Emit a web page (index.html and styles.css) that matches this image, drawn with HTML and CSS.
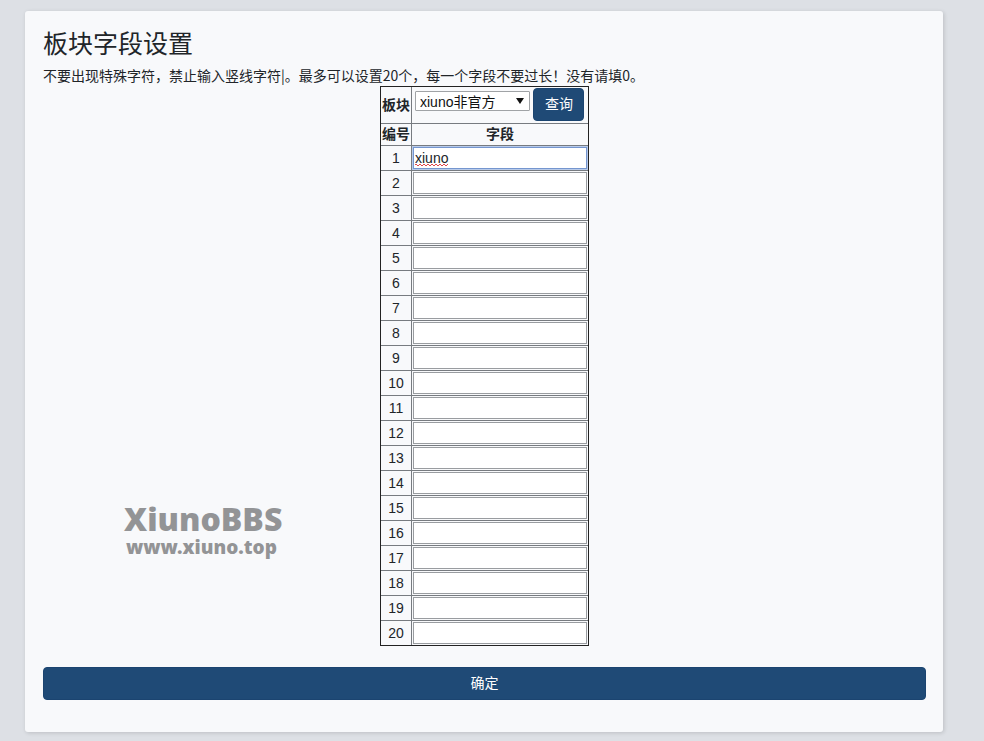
FILE: index.html
```html
<!DOCTYPE html>
<html lang="zh-CN">
<head>
<meta charset="utf-8">
<title>板块字段设置</title>
<link rel="stylesheet" href="styles.css">
</head>
<body>
<main class="card">
  <h1 class="title">板块字段设置</h1>
  <p class="hint">不要出现特殊字符，禁止输入竖线字符|。最多可以设置20个，每一个字段不要过长！没有请填0。</p>
  <form>
    <table class="fields">
      <thead>
        <tr class="query-row">
          <th><label for="forum">板块</label></th>
          <td>
            <div class="query">
              <span class="picker"><select id="forum"><option>xiuno非官方</option></select></span>
              <button class="btn" type="button">查询</button>
            </div>
          </td>
        </tr>
        <tr class="head-row"><th>编号</th><th>字段</th></tr>
      </thead>
      <tbody id="rows"></tbody>
    </table>
    <button class="btn btn-block" type="submit">确定</button>
  </form>
  <div class="watermark">
    <div class="brand">XiunoBBS</div>
    <div class="site">www.xiuno.top</div>
  </div>
</main>
<script src="rows.js"></script>
</body>
</html>
```
FILE: rows.js
```js
const body = document.getElementById("rows");
for (let i = 1; i <= 20; i++) {
  const row = body.insertRow();
  const label = document.createElement("label");
  label.htmlFor = "field" + i;
  label.textContent = i;
  row.insertCell().append(label);
  const input = document.createElement("input");
  input.type = "text";
  input.id = "field" + i;
  input.className = i === 1 ? "field active" : "field";
  input.value = i === 1 ? "xiuno" : "";
  row.insertCell().append(input);
}
```
FILE: styles.css
```css
* { box-sizing: border-box; }
body {
  margin: 0;
  padding: 11px 41px 9px 25px;
  background: #dde0e5;
  color: #212529;
  font: 14px/21px "Liberation Sans", "Noto Sans CJK SC", sans-serif;
}
.card {
  position: relative;
  padding: 17px 17px 32px 18px;
  background: #f8f9fb;
  border-radius: 3px;
  box-shadow: 1px 1px 4px rgba(0, 0, 0, 0.15);
}
.title {
  margin: 0 0 5px;
  font-size: 25px;
  line-height: 32px;
  font-weight: 400;
}
.hint { margin: 0; font-family: "Noto Sans CJK SC", sans-serif; }
.fields {
  margin: 0 auto 21px;
  border-collapse: collapse;
  border: 1px double #222;
  text-align: center;
}
.fields th, .fields td { padding: 0; border: 1px solid #777b80; }
.fields tr > :first-child { min-width: 31px; }
.query-row { height: 37px; }
.head-row { height: 22px; }
.fields tbody tr { height: 25px; }
.fields thead tr:first-child > * { border-top-color: #222; }
.fields tr > :first-child { border-left-color: #222; }
.fields tr > :last-child { border-right-color: #222; }
.fields tbody tr:last-child > * { border-bottom-color: #222; }
.query { display: flex; gap: 3px; padding: 0 3px 2px; }
.picker { position: relative; display: block; width: 115px; height: 20px; margin-top: 3px; }
.picker select {
  display: block;
  width: 100%;
  height: 20px;
  padding: 0 0 0 4px;
  appearance: none;
  border: 1px solid #a0a3a6;
  border-radius: 1px;
  background: #fff;
  color: #111;
  font: inherit;
}
.picker::after {
  content: "";
  position: absolute;
  top: 7px;
  right: 6px;
  border: solid transparent;
  border-width: 6px 4px 0;
  border-top-color: #111;
}
.btn {
  height: 33px;
  padding: 0 11px;
  border: 1px solid #1b4470;
  border-radius: 4px;
  background: #1f4a76;
  color: #fff;
  font: inherit;
}
.query .btn { padding: 0 10px 0 11px; }
.btn-block { display: block; width: 100%; }
.field {
  display: block;
  width: 174px;
  height: 22px;
  margin: 1px;
  padding: 0 1px;
  border: 1px solid #999ca0;
  background: #fff;
  color: #212529;
  font: inherit;
  outline: none;
}
/* focused field with a spelling squiggle under its word */
.active {
  border-color: #7596cf;
  box-shadow: 0 0 0 1px #b9cbea;
  background:
    repeating-linear-gradient(90deg, #e0494b 0 2px, transparent 2px 4px) 1px 16px / 33px 1px no-repeat,
    repeating-linear-gradient(90deg, transparent 0 2px, #e0494b 2px 4px) 1px 17px / 33px 1px no-repeat,
    #fff;
}
.watermark {
  position: absolute;
  left: 99px;
  bottom: 172px;
  color: #939496;
  font-family: "Noto Sans", sans-serif;
  font-weight: 900;
}
.brand { font-size: 32px; line-height: 30px; }
.site { font-size: 19px; line-height: 26px; padding-left: 2px; }
```
